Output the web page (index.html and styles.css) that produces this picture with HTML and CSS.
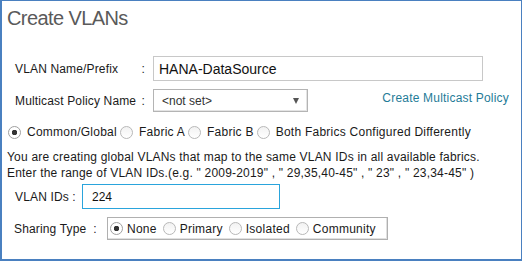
FILE: index.html
```html
<!DOCTYPE html>
<html lang="en">
<head>
<meta charset="UTF-8">
<title>Create VLANs</title>
<link rel="stylesheet" href="styles.css">
</head>
<body>
    <div class="dialog">
        <h1>Create VLANs</h1>

        <div class="row name-row">
            <span class="label"><span>VLAN Name/Prefix</span><span>:</span></span>
            <input class="text-input name-input" type="text" value="HANA-DataSource">
        </div>

        <div class="row policy-row">
            <span class="label"><span>Multicast Policy Name</span><span>:</span></span>
            <div class="select">
                <span>&lt;not set&gt;</span>
                <span class="arrow"></span>
            </div>
            <a class="link" href="#">Create Multicast Policy</a>
        </div>

        <div class="radios scope">
            <label class="radio"><input type="radio" name="scope" checked>Common/Global</label>
            <label class="radio"><input type="radio" name="scope">Fabric A</label>
            <label class="radio"><input type="radio" name="scope">Fabric B</label>
            <label class="radio"><input type="radio" name="scope">Both Fabrics Configured Differently</label>
        </div>

        <p class="note">
            You are creating global VLANs that map to the same VLAN IDs in all available fabrics.<br>
            Enter the range of VLAN IDs.(e.g. " 2009-2019" , " 29,35,40-45" , " 23" , " 23,34-45" )
        </p>

        <div class="row ids-row">
            <span class="label ids-label">VLAN IDs :</span>
            <input class="text-input ids-input" type="text" value="224">
        </div>

        <div class="row sharing-row">
            <span class="label sharing-label">Sharing Type &nbsp;:</span>
            <div class="radios sharing">
                <label class="radio"><input type="radio" name="sharing" checked>None</label>
                <label class="radio"><input type="radio" name="sharing">Primary</label>
                <label class="radio"><input type="radio" name="sharing">Isolated</label>
                <label class="radio"><input type="radio" name="sharing">Community</label>
            </div>
        </div>
    </div>
</body>
</html>
```

FILE: styles.css
```css
body {
    margin: 0;
    font-family: "Liberation Sans", Arial, sans-serif;
    font-size: 12px;
    color: #1a1a1a;
    background: #fff;
}

.dialog {
    box-sizing: border-box;
    width: 522px;
    height: 261px;
    border-style: solid;
    border-color: #4a80c0;
    border-width: 1px 1px 2px 2px;
    padding: 4px 12px 0 5px;
    overflow: hidden;
}

h1 {
    margin: 0;
    font-size: 20px;
    line-height: 26px;
    font-weight: normal;
    letter-spacing: -0.6px;
    color: #5a5a5a;
}

.row {
    display: flex;
    align-items: center;
    margin-left: 8px;
}

.label {
    display: flex;
    justify-content: space-between;
    width: 130px;
    padding-right: 8px;
    letter-spacing: 0.15px;
}

.text-input {
    box-sizing: border-box;
    margin: 0;
    padding: 0 5px;
    font-family: "Liberation Sans", Arial, sans-serif;
    color: #111;
    border: 1px solid #c8c8c8;
    outline: none;
}

.name-row {
    margin-top: 25px;
}

.name-input {
    width: 330px;
    height: 25px;
    font-size: 14px;
}

.policy-row {
    margin-top: 8px;
}

.select {
    box-sizing: border-box;
    display: flex;
    align-items: center;
    justify-content: space-between;
    width: 155px;
    height: 23px;
    padding: 0 8px 0 8px;
    border: 1px solid #b4b4b4;
    box-shadow: inset -1px -1px 0 #e4e4e4;
    color: #333;
}

.arrow {
    width: 0;
    height: 0;
    border-left: 3.5px solid transparent;
    border-right: 3.5px solid transparent;
    border-top: 6px solid #555;
}

.link {
    margin: 0 0 6px auto;
    color: #1f7c98;
    text-decoration: none;
    letter-spacing: 0.2px;
}

.radios {
    display: flex;
    align-items: center;
}

.radio {
    display: flex;
    align-items: center;
    margin-right: 3px;
    letter-spacing: 0.25px;
}

.radio input {
    appearance: none;
    box-sizing: border-box;
    width: 13px;
    height: 13px;
    margin: 0 6px 0 0;
    border: 1px solid #b8b8b8;
    border-radius: 50%;
    background: linear-gradient(#f2f2f2, #ffffff);
}

.radio input:checked {
    background: radial-gradient(circle, #333 0 2.5px, #fff 3px);
    border-color: #a0a0a0;
}

.scope {
    margin: 13px 0 0 1px;
    height: 14px;
}

.note {
    margin: 10px 0 0 0;
    line-height: 16px;
    letter-spacing: 0.2px;
}

.ids-row {
    margin-top: 3px;
}

.ids-label {
    width: 67px;
    padding: 0;
    display: block;
}

.ids-input {
    width: 198px;
    height: 25px;
    padding-left: 9px;
    font-size: 12px;
    border-color: #2aa4dc;
}

.sharing-row {
    margin-top: 8px;
    margin-left: 7px;
}

.sharing-label {
    width: 93px;
    padding: 0;
    display: block;
}

.sharing {
    box-sizing: border-box;
    width: 281px;
    height: 23px;
    padding-left: 2px;
    border: 1px solid #b0b0b0;
    box-shadow: inset -1px -1px 0 #e0e0e0;
}

.sharing .radio {
    margin-right: 6px;
}

.sharing .radio input {
    margin-right: 4px;
}
```
